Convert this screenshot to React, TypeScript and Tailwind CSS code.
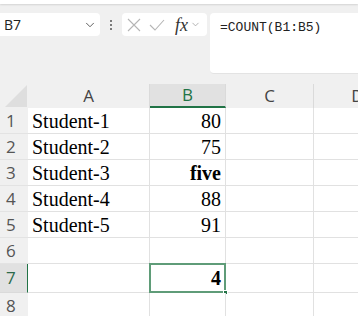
import { ChevronDown } from 'lucide-react';

const cols = [
  { key: 'A', w: 'w-[122px]' },
  { key: 'B', w: 'w-[76px]' },
  { key: 'C', w: 'w-[88px]' },
  { key: 'D', w: 'w-[88px]' },
];

const rows: { n: number; a: string; b: string; bold?: boolean; h: string }[] = [
  { n: 1, a: 'Student-1', b: '80', h: 'h-[26px]' },
  { n: 2, a: 'Student-2', b: '75', h: 'h-[26px]' },
  { n: 3, a: 'Student-3', b: 'five', bold: true, h: 'h-[26px]' },
  { n: 4, a: 'Student-4', b: '88', h: 'h-[26px]' },
  { n: 5, a: 'Student-5', b: '91', h: 'h-[26px]' },
  { n: 6, a: '', b: '', h: 'h-[26px]' },
  { n: 7, a: '', b: '4', bold: true, h: 'h-[29px]' },
  { n: 8, a: '', b: '', h: 'h-[26px]' },
];

const uiFont = "font-['Segoe_UI','Open_Sans',Arial,sans-serif]";
const cellFont = "font-['Liberation_Serif','Times_New_Roman',serif]";

function FormulaBar() {
  return (
    <div className="bg-[#f0f0f0]">
      <div className="h-[4px] bg-white shadow-[0_1px_2px_rgba(0,0,0,0.12)]" />
      <div className="flex items-start h-[80px] pt-[9px]">
        <div className="flex items-center justify-between w-[100px] h-[23px] bg-white rounded-r-[4px] pl-[4px] pr-[3px]">
          <span className={`${uiFont} text-[14px] text-[#222]`}>B7</span>
          <ChevronDown className="w-[14px] h-[14px] text-[#555]" strokeWidth={1.6} />
        </div>
        <div className="flex flex-col items-center justify-center gap-[2px] w-[22px] h-[23px]">
          <span className="w-[2px] h-[2px] bg-[#555] rounded-full" />
          <span className="w-[2px] h-[2px] bg-[#555] rounded-full" />
          <span className="w-[2px] h-[2px] bg-[#555] rounded-full" />
        </div>
        <div className="flex items-center w-[85px] h-[23px] bg-white rounded-[4px] pl-[5px]">
          <svg width="14" height="14" viewBox="0 0 14 14">
            <path d="M1 1 L13 13 M13 1 L1 13" stroke="#b5b5b5" strokeWidth="1.1" fill="none" />
          </svg>
          <svg width="16" height="14" viewBox="0 0 16 14" className="ml-[8px]">
            <path d="M1 7 L6 12 L15 2" stroke="#b5b5b5" strokeWidth="1.1" fill="none" />
          </svg>
          <span className="ml-[10px] font-['Liberation_Serif',serif] italic text-[18px] text-[#333] leading-none">
            fx
          </span>
          <ChevronDown className="ml-[2px] w-[11px] h-[11px] text-[#999]" strokeWidth={1.6} />
        </div>
        <div className="ml-[3px] flex-1 h-[61px] bg-white rounded-l-[4px] border-b border-[#e3e3e3] pl-[10px]">
          <span className="font-['Liberation_Mono',monospace] text-[13px] leading-[24px] text-[#222]">=COUNT(B1:B5)</span>
        </div>
      </div>
    </div>
  );
}

function HeaderRow() {
  return (
    <div className="flex h-[24px] bg-[#f0f0f0]">
      <div className="relative w-[28px] shrink-0">
        <svg width="28" height="24" viewBox="0 0 28 24" className="absolute inset-0">
          <polygon points="5,23 27,23 27,1" fill="#dedede" />
        </svg>
      </div>
      {cols.map((c) => {
        const sel = c.key === 'B';
        return (
          <div
            key={c.key}
            className={`${c.w} shrink-0 flex items-center justify-center border-r border-[#dadada] ${
              sel ? 'bg-[#e1e1e1] border-b-2 border-b-[#217346] text-[#217346]' : 'text-[#444]'
            } ${uiFont} text-[17px]`}
          >
            {c.key}
          </div>
        );
      })}
    </div>
  );
}

function Row({ r }: { r: (typeof rows)[number] }) {
  const sel = r.n === 7;
  return (
    <div className={`flex ${r.h}`}>
      <div
        className={`w-[28px] shrink-0 flex items-center pl-[6px] border-b ${
          sel
            ? 'bg-[#e1e1e1] text-[#2d6a4a] border-r border-r-[#217346] border-b-[#dadada]'
            : 'bg-[#f0f0f0] text-[#555] border-b-[#e3e3e3]'
        } ${uiFont} text-[17px]`}
      >
        {r.n}
      </div>
      <div className={`w-[122px] shrink-0 flex items-center pl-[4px] bg-white border-r border-b border-[#e1e1e1] ${cellFont} text-[20px] text-black`}>
        {r.a}
      </div>
      <div
        className={`relative w-[76px] shrink-0 flex items-center justify-end pr-[4px] bg-white border-r border-b border-[#e1e1e1] ${cellFont} text-[20px] text-black ${
          r.bold ? 'font-bold' : ''
        }`}
      >
        {r.b}
        {sel && (
          <>
            <div className="absolute -left-[1px] -top-[1px] -right-[1px] -bottom-[1px] border-2 border-[#5f9c78]" />
            <div className="absolute -right-[3px] -bottom-[3px] w-[5px] h-[5px] bg-[#217346] border border-white" />
          </>
        )}
      </div>
      <div className="w-[88px] shrink-0 bg-white border-r border-b border-[#e1e1e1]" />
      <div className="w-[88px] shrink-0 bg-white border-b border-[#e1e1e1]" />
    </div>
  );
}

export default function App() {
  return (
    <div className="w-[358px] h-[316px] overflow-hidden bg-white">
      <FormulaBar />
      <HeaderRow />
      {rows.map((r) => (
        <Row key={r.n} r={r} />
      ))}
    </div>
  );
}
